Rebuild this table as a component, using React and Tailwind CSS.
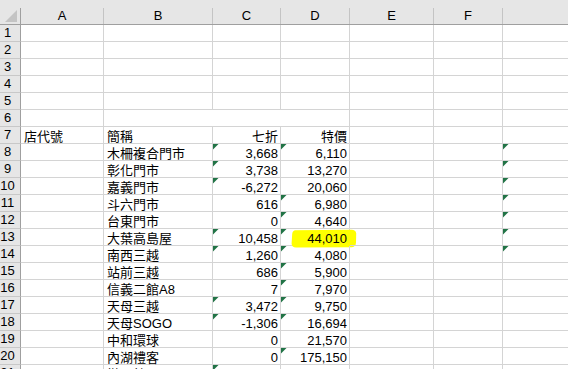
import React from "react";

const GRID = "grid grid-cols-[21px_83px_109px_68px_69px_84px_69px_80px]";
const LETTERS = ["A", "B", "C", "D", "E", "F", ""];

// store rows: [row, name, 七折, 特價, flags for green markers on C / D / G]
const ROWS = [
  [8, "木柵複合門市", "3,668", "6,110", "CDG"],
  [9, "彰化門市", "3,738", "13,270", "CG"],
  [10, "嘉義門市", "-6,272", "20,060", "CG"],
  [11, "斗六門市", "616", "6,980", "DG"],
  [12, "台東門市", "0", "4,640", "DG"],
  [13, "大葉高島屋", "10,458", "44,010", "CDG"],
  [14, "南西三越", "1,260", "4,080", "CDG"],
  [15, "站前三越", "686", "5,900", "D"],
  [16, "信義二館A8", "7", "7,970", "D"],
  [17, "天母三越", "3,472", "9,750", "CD"],
  [18, "天母SOGO", "-1,306", "16,694", "CD"],
  [19, "中和環球", "0", "21,570", ""],
  [20, "內湖禮客", "0", "175,150", "D"],
  [21, "微風館", "3,009", "0", "C"],
];

function Marker() {
  return (
    <svg className="absolute left-0 top-0 z-20" width="6" height="6" viewBox="0 0 6 6">
      <polygon points="0,0 5.5,0 0,5.5" fill="#217346" />
    </svg>
  );
}

function Highlight() {
  return (
    <svg
      className="absolute left-[10px] top-0 z-0"
      width="66"
      height="19"
      viewBox="0 0 66 19"
    >
      <path
        d="M4 1.2 Q1.5 1.6 1.2 5 L0.6 14.5 Q0.8 18.4 5 18.6 L61 18.2 Q64.8 17.8 65 13.5 L65.2 4.5 Q64.8 0.9 60.5 0.8 Z"
        fill="#ffff00"
      />
    </svg>
  );
}

function Cell({ text, right, marker, noRight, highlight }) {
  return (
    <div
      className={`relative h-[17px] border-b border-[#d4d4d4] flex items-end ${
        noRight ? "" : "border-r"
      } ${right ? "justify-end pr-[2px]" : "pl-[3px]"}`}
    >
      {highlight && <Highlight />}
      {marker && <Marker />}
      {text !== undefined && (
        <span className="relative z-10 leading-[12px] whitespace-nowrap">{text}</span>
      )}
    </div>
  );
}

function RowHead({ n }) {
  return (
    <div className="h-[17px] bg-[#e6e6e6] border-r border-b border-r-[#9f9f9f] border-b-[#c8c8c8] pr-[5px] text-center leading-[16px]">
      {n}
    </div>
  );
}

export default function App() {
  return (
    <div className="w-[568px] h-[369px] overflow-hidden bg-white text-[13px] text-black font-['Liberation_Sans','Noto_Sans_CJK_TC',sans-serif]">
      {/* column headers */}
      <div className="w-[583px] h-[25px] bg-[#e6e6e6] border-b border-[#9f9f9f] flex flex-col">
        <div className="h-[8px]" />
        <div className={`${GRID} h-[16px]`}>
          <div className="relative border-r border-[#9f9f9f]">
            <svg className="absolute left-[5px] top-[2px]" width="12" height="12" viewBox="0 0 12 12">
              <polygon points="12,0 12,12 0,12" fill="#c4c4c4" />
            </svg>
          </div>
          {LETTERS.map((l, i) => (
            <div
              key={i}
              className="border-r border-[#c4c4c4] text-center leading-[16px]"
            >
              {l}
            </div>
          ))}
        </div>
      </div>

      {/* blank rows 1-6 */}
      {[1, 2, 3, 4, 5, 6].map((r) => (
        <div key={r} className={`${GRID} w-[583px]`}>
          <RowHead n={r} />
          <Cell />
          <Cell noRight={r === 6} />
          <Cell noRight={r === 6} />
          <Cell />
          <Cell />
          <Cell />
          <Cell />
        </div>
      ))}

      {/* header row 7 */}
      <div className={`${GRID} w-[583px]`}>
        <RowHead n={7} />
        <Cell text="店代號" />
        <Cell text="簡稱" />
        <Cell text="七折" right />
        <Cell text="特價" right />
        <Cell />
        <Cell />
        <Cell />
      </div>

      {ROWS.map(([n, name, c, d, flags]) => (
        <div key={n} className={`${GRID} w-[583px]`}>
          <RowHead n={n} />
          <Cell />
          <Cell text={name} />
          <Cell text={c} right marker={flags.includes("C")} />
          <Cell text={d} right marker={flags.includes("D")} highlight={n === 13} />
          <Cell />
          <Cell />
          <Cell marker={flags.includes("G")} />
        </div>
      ))}
    </div>
  );
}
